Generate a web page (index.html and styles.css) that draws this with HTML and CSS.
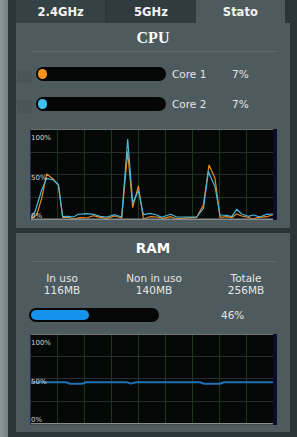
FILE: index.html
```html
<!DOCTYPE html>
<html>
<head>
<meta charset="utf-8">
<link rel="stylesheet" href="styles.css">
</head>
<body>
<div class="frame">
  <div class="strip"></div>
  <div class="main">
    <div class="tabs">
      <div class="tab t1">2.4GHz</div>
      <div class="tab t2">5GHz</div>
      <div class="tab active">Stato</div>
    </div>

    <section class="panel cpu">
      <h2 class="title">CPU</h2>
      <div class="sep"></div>
      <div class="core-row">
        <span class="check"></span>
        <div class="bar"><div class="fill orange" style="width:7%"></div></div>
        <span class="core-label">Core 1</span>
        <span class="core-pct">7%</span>
      </div>
      <div class="core-row">
        <span class="check"></span>
        <div class="bar"><div class="fill cyan" style="width:7%"></div></div>
        <span class="core-label">Core 2</span>
        <span class="core-pct">7%</span>
      </div>
      <svg class="chart cpu-chart" width="247" height="91" viewBox="0 0 247 91">
        <rect width="247" height="91" fill="#050806"/>
        <g stroke="#2a2d2c" stroke-width="1">
          <line x1="0" x2="243" y1="23.5" y2="23.5"/>
          <line x1="0" x2="243" y1="45.5" y2="45.5"/>
          <line x1="0" x2="243" y1="68.5" y2="68.5"/>
        </g>
        <g stroke="#173a17" stroke-width="1">
          <line x1="27.5" x2="27.5" y1="1" y2="89"/>
          <line x1="54.5" x2="54.5" y1="1" y2="89"/>
          <line x1="81.5" x2="81.5" y1="1" y2="89"/>
          <line x1="108.5" x2="108.5" y1="1" y2="89"/>
          <line x1="135.5" x2="135.5" y1="1" y2="89"/>
          <line x1="162.5" x2="162.5" y1="1" y2="89"/>
          <line x1="189.5" x2="189.5" y1="1" y2="89"/>
          <line x1="216.5" x2="216.5" y1="1" y2="89"/>
        </g>
        <g transform="translate(0.7 1)" fill="none" stroke-width="1.2" stroke-linejoin="round">
          <polyline stroke="#e88a1c" points="0,89.3 6,85 11,68.3 16,44 22.7,49.3 27.7,55 32,87.3 37.7,87.3 42.7,89 49.3,87.7 56,88 62.7,85.7 69.3,87.3 76,88.3 84.3,86 91,88 97,21.7 102,77.3 107.7,56 112.7,89 119.3,86.7 126,87 132.7,88.3 140,86.7 146,88.7 166,87.3 172.7,75 178.3,35 184.3,48.3 189.3,87.3 196,86.7 201,87.7 206,84 211,86 217.7,87.3 221.7,89.3 227.7,87.3 236,86.7 242.3,84.7"/>
          <polyline stroke="#4ab6da" points="0,88.3 4.3,81.7 11,60 16,48.3 22.7,50 27.7,55 32,86.7 37.7,86.3 42.7,87 47.7,84.3 56,83.7 62.7,84.3 69.3,86.3 76,87 84.3,84.7 91,87 97,9.3 102,73.3 107.7,60.7 112.7,84.7 119.3,83.3 126,85 131,87.3 140,84.3 146,87 166,87 172.7,78.3 177.7,41.7 184.3,56.7 189.3,85 196,85.3 201,86.7 206,79.3 211,84 217.7,86.3 222.7,85 229.3,87 236,84.3 242.3,84"/>
        </g>
        <rect x="0" y="0" width="243" height="1" fill="#6f7373"/>
        <rect x="0" y="89.5" width="243" height="1.5" fill="#8a8e8f"/>
        <rect x="0" y="0" width="1" height="91" fill="#24245e"/>
        <rect x="243" y="0" width="4" height="91" fill="#0b0b30"/>
        <g class="axis">
          <text x="1" y="11">100%</text>
          <text x="1" y="51">50%</text>
          <text x="1" y="89">0%</text>
        </g>
      </svg>
    </section>

    <section class="panel ram">
      <h2 class="title">RAM</h2>
      <div class="sep"></div>
      <div class="stats">
        <div>In uso<br>116MB</div>
        <div>Non in uso<br>140MB</div>
        <div>Totale<br>256MB</div>
      </div>
      <div class="ram-row">
        <div class="bar"><div class="fill blue" style="width:46%"></div></div>
        <span class="ram-pct">46%</span>
      </div>
      <svg class="chart ram-chart" width="247" height="91" viewBox="0 0 247 91">
        <rect width="247" height="91" fill="#050806"/>
        <g stroke="#2a2d2c" stroke-width="1">
          <line x1="0" x2="243" y1="22.5" y2="22.5"/>
          <line x1="0" x2="243" y1="44.5" y2="44.5"/>
          <line x1="0" x2="243" y1="67.5" y2="67.5"/>
        </g>
        <g stroke="#173a17" stroke-width="1">
          <line x1="27.5" x2="27.5" y1="1" y2="89"/>
          <line x1="54.5" x2="54.5" y1="1" y2="89"/>
          <line x1="81.5" x2="81.5" y1="1" y2="89"/>
          <line x1="108.5" x2="108.5" y1="1" y2="89"/>
          <line x1="135.5" x2="135.5" y1="1" y2="89"/>
          <line x1="162.5" x2="162.5" y1="1" y2="89"/>
          <line x1="189.5" x2="189.5" y1="1" y2="89"/>
          <line x1="216.5" x2="216.5" y1="1" y2="89"/>
        </g>
        <polyline fill="none" stroke="#2170b5" stroke-width="2" stroke-linejoin="round" points="1,48.3 36,48.3 40,49.8 52,49.8 56,48.3 97,48.3 101,49.6 106,48.3 170,48.3 174,49.8 190,49.8 194,48.3 243,48.3"/>
        <rect x="0" y="0" width="243" height="1" fill="#6f7373"/>
        <rect x="0" y="89" width="243" height="1.5" fill="#8a8e8f"/>
        <rect x="0" y="0" width="1" height="91" fill="#24245e"/>
        <rect x="243" y="0" width="4" height="91" fill="#0b0b30"/>
        <g class="axis">
          <text x="1" y="10.5">100%</text>
          <text x="1" y="50">50%</text>
          <text x="1" y="88">0%</text>
        </g>
      </svg>
    </section>
  </div>
</div>
</body>
</html>
```
FILE: styles.css
```css
html, body {
  margin: 0;
  padding: 0;
}
body {
  background: #2a3538;
  font-family: "DejaVu Sans", Verdana, sans-serif;
  color: #e4e6e6;
  overflow: hidden;
}
.frame {
  display: flex;
  height: 437px;
}
.strip {
  flex: none;
  width: 8px;
  margin-right: 8px;
  background: linear-gradient(to right, #8e999c, #748084);
}
.main {
  flex: none;
  width: 274px;
}
.tabs {
  display: flex;
  width: 269px;
  height: 23px;
}
.tab {
  flex: 1;
  box-sizing: border-box;
  text-align: center;
  font-weight: bold;
  font-size: 11.5px;
  line-height: 22px;
  padding-top: 1px;
  color: #f4f4f4;
}
.t1 {
  background: #344145;
  border-right: 1px solid #2c373b;
}
.t2 {
  background: #2f3b3f;
}
.active {
  background: #4d5a5e;
}
.panel {
  background: #4d5a5e;
  padding: 5px 0 8px;
}
.ram {
  margin-top: 5px;
  padding-bottom: 7px;
}
.title {
  margin: 0;
  text-align: center;
  line-height: 20px;
  color: #ffffff;
  font-weight: bold;
}
.cpu .title {
  font-family: "Liberation Serif", "Times New Roman", serif;
  font-size: 16px;
}
.ram .title {
  font-size: 13.5px;
}
.sep {
  height: 1px;
  background: #5e6b6f;
  margin: 3px 14px 0 16px;
}
.core-row {
  display: flex;
  align-items: center;
  height: 14px;
  margin-top: 15px;
  padding-left: 1px;
  font-size: 10.5px;
}
.core-row + .core-row {
  margin-top: 16px;
}
.check {
  flex: none;
  align-self: flex-start;
  width: 15px;
  height: 13px;
  margin-top: 3px;
  margin-right: 4px;
  background: #485559;
}
.bar {
  flex: none;
  box-sizing: border-box;
  width: 130px;
  height: 14px;
  padding: 2px;
  background: #050606;
  border-radius: 7px;
}
.fill {
  height: 10px;
  border-radius: 5px;
}
.orange {
  background: #f7941d;
}
.cyan {
  background: #3cc2f2;
}
.blue {
  background: #1492ec;
}
.core-label {
  width: 60px;
  margin-left: 6px;
}
.chart {
  display: block;
  margin: 18px 0 0 14px;
}
.ram-chart {
  margin-top: 12px;
}
.axis text {
  font-family: "DejaVu Sans", sans-serif;
  font-size: 7px;
  fill: #d6d8d8;
}
.stats {
  display: grid;
  grid-template-columns: repeat(3, 92px);
  margin-top: 10px;
  text-align: center;
  font-size: 10.5px;
  line-height: 12px;
}
.ram-row {
  display: flex;
  align-items: center;
  margin-top: 12px;
  padding-left: 13px;
  font-size: 10.5px;
}
.ram-pct {
  margin-left: 62px;
}
```
